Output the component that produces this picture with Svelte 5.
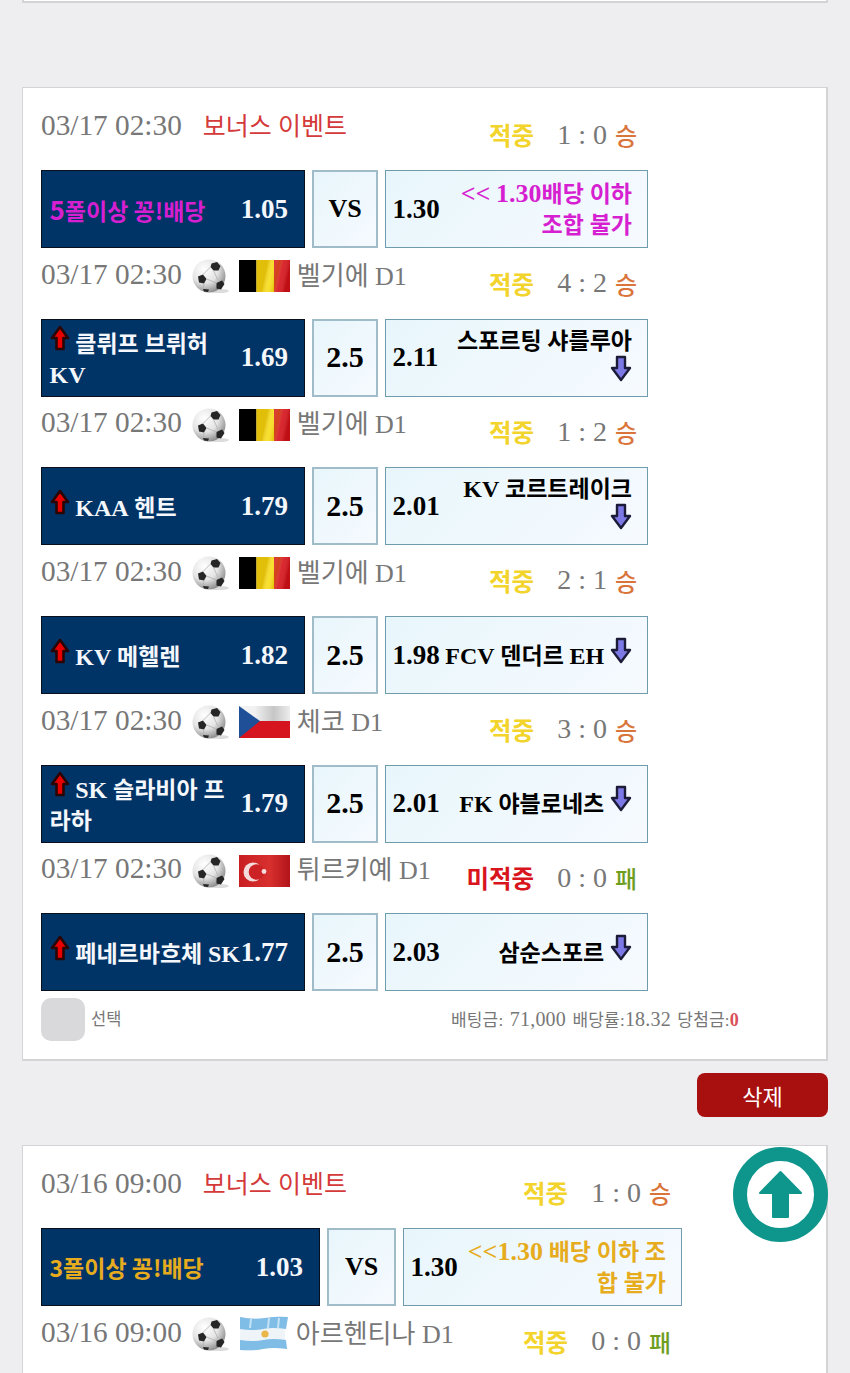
<script>
	const bonus = (date, score, outcome, home, odds1, odds2, away, color) => ({
		date, bonus: true, result: { label: '적중', score, outcome, kind: 'win' },
		home, odds1, mid: 'VS', odds2, away, color
	});
	const game = (flag, league, label, score, outcome, home, odds1, odds2, away) => ({
		date: '03/17 02:30', flag, league,
		result: { label, score, outcome, kind: outcome === '승' ? 'win' : 'lose' },
		home, odds1, mid: '2.5', odds2, away
	});

	const slip = [
		bonus('03/17 02:30', '1 : 0', '승', '5폴이상 꽁!배당', '1.05', '1.30', '<< 1.30배당 이하 조합 불가', 'magenta'),
		game('be', '벨기에 D1', '적중', '4 : 2', '승', '클뤼프 브뤼허 KV', '1.69', '2.11', '스포르팅 샤를루아'),
		game('be', '벨기에 D1', '적중', '1 : 2', '승', 'KAA 헨트', '1.79', '2.01', 'KV 코르트레이크'),
		game('be', '벨기에 D1', '적중', '2 : 1', '승', 'KV 메헬렌', '1.82', '1.98', 'FCV 덴더르 EH'),
		game('cz', '체코 D1', '적중', '3 : 0', '승', 'SK 슬라비아 프라하', '1.79', '2.01', 'FK 야블로네츠'),
		game('tr', '튀르키예 D1', '미적중', '0 : 0', '패', '페네르바흐체 SK', '1.77', '2.03', '삼순스포르')
	];

	// latin runs sit larger than the hangul next to them
	const pieces = (text) => text.split(/([A-Za-z0-9<.]+)/);
</script>

{#snippet upArrow()}
	<svg class="arrow" width="20" height="27" viewBox="0 0 20 27">
		<path d="M10 2 L18 13 L13.5 13 L13.5 24 L6.5 24 L6.5 13 L2 13 Z" fill="#e60000" stroke="#2a0505" stroke-width="2.6" stroke-linejoin="round" />
	</svg>
{/snippet}

{#snippet downArrow()}
	<svg class="arrow" width="22" height="27" viewBox="0 0 22 27">
		<path d="M7 2 L15 2 L15 13 L20 13 L11 25 L2 13 L7 13 Z" fill="#7c79e6" stroke="#1c1c38" stroke-width="2.4" stroke-linejoin="round" />
	</svg>
{/snippet}

{#snippet label(text)}
	{#each pieces(text) as piece, i}{#if i % 2}<span class="latin">{piece}</span>{:else}{piece}{/if}{/each}
{/snippet}

{#snippet ball()}
	<svg class="ball" width="38" height="36" viewBox="0 0 38 36">
		<defs>
			<radialGradient id="ballShade" cx="0.36" cy="0.3" r="0.75">
				<stop offset="0" stop-color="#ffffff" />
				<stop offset="0.55" stop-color="#e4e4e4" />
				<stop offset="1" stop-color="#868686" />
			</radialGradient>
			<filter id="ballSoft"><feGaussianBlur stdDeviation="0.5" /></filter>
		</defs>
		<ellipse cx="27" cy="32" rx="10" ry="2" fill="#dcdcdc" />
		<circle cx="17" cy="17" r="16.5" fill="url(#ballShade)" />
		<g fill="#262626" filter="url(#ballSoft)">
			<path d="M19.5 4.5 L25 3 L28.5 7 L26.5 11.5 L21.5 11.5 L18.5 8 Z" />
			<path d="M6 17.5 L11 15.5 L14.5 20 L12 24.5 L7 23.5 Z" />
			<path d="M24.5 24 L30 21.5 L32.5 25 L29 30.5 L24.5 29.5 Z" />
			<path d="M11 30 L17 30.5 L16 33 L12 32.5 Z" />
		</g>
		<path d="M18.5 8 L11 15.5 M14.5 20 L24.5 24 M21.5 11.5 L26 21.5 M12 24.5 L11 30" stroke="#b0b0b0" stroke-width="0.8" />
	</svg>
{/snippet}

{#snippet flag(code)}
	{#if code === 'be'}
		<svg class="flag" width="51" height="32" viewBox="0 0 51 32">
			<defs>
				<linearGradient id="beSheen" x1="0" x2="1" y1="0" y2="0.2">
					<stop offset="0.33" stop-color="#c79a00" stop-opacity="0.45" />
					<stop offset="0.5" stop-color="#fff" stop-opacity="0.12" />
					<stop offset="0.66" stop-color="#c79a00" stop-opacity="0.35" />
					<stop offset="0.8" stop-color="#fff" stop-opacity="0.08" />
					<stop offset="1" stop-color="#700" stop-opacity="0.25" />
				</linearGradient>
			</defs>
			<rect width="17.5" height="32" fill="#000" />
			<rect x="17.5" width="17.5" height="32" fill="#f7dc10" />
			<rect x="35" width="16" height="32" fill="#d6141c" />
			<rect x="17.5" width="33.5" height="32" fill="url(#beSheen)" />
		</svg>
	{:else if code === 'cz'}
		<svg class="flag" width="51" height="32" viewBox="0 0 51 32">
			<defs>
				<linearGradient id="czSheen" x1="0" x2="1" y1="0" y2="0">
					<stop offset="0.3" stop-color="#f2f2f2" />
					<stop offset="0.68" stop-color="#c6c6c6" />
					<stop offset="1" stop-color="#ececec" />
				</linearGradient>
			</defs>
			<rect width="51" height="15" fill="url(#czSheen)" />
			<rect y="15" width="51" height="17" fill="#d5141f" />
			<path d="M0 0 L21 15 L0 32 Z" fill="#1f4f96" />
		</svg>
	{:else if code === 'tr'}
		<svg class="flag" width="51" height="32" viewBox="0 0 51 32">
			<defs>
				<linearGradient id="trSheen" x1="0" x2="1" y1="0" y2="0">
					<stop offset="0" stop-color="#c81e22" />
					<stop offset="0.6" stop-color="#d8302e" />
					<stop offset="1" stop-color="#b2141a" />
				</linearGradient>
			</defs>
			<rect width="51" height="32" fill="url(#trSheen)" />
			<circle cx="14" cy="17" r="9.5" fill="#f5dcdc" />
			<circle cx="17.5" cy="17" r="7.8" fill="#cd2225" />
			<circle cx="25" cy="16.5" r="2.4" fill="#f5dcdc" />
		</svg>
	{:else}
		<svg class="flag" width="50" height="36" viewBox="0 0 50 36">
			<path d="M1 1 Q14 4 26 2 T49 1 L46 12 L46 23 L48 33 Q34 31 24 33 T1 34 L1 23 L1 12 Z" fill="#eef4f8" />
			<path d="M1 1 Q14 4 26 2 T49 1 L47 13 Q34 11 24 13 T1 13 Z" fill="#7fbde6" />
			<path d="M1 24 Q14 26 24 24 T47 24 L48 33 Q34 31 24 33 T1 34 Z" fill="#7fbde6" />
			<path d="M12 3 L11 12 M30 2 L29 12 M40 2 L39 12" stroke="#c4e2f5" stroke-width="2" />
			<circle cx="26" cy="18" r="3.6" fill="#e9b64a" />
		</svg>
	{/if}
{/snippet}

{#snippet result(r)}
	<div class="result">
		<span class="hit" class:miss={r.label === '미적중'}>{r.label}</span>
		<span class="score">{r.score}</span>
		<span class="outcome" class:lose={r.kind === 'lose'}>{r.outcome}</span>
	</div>
{/snippet}

{#snippet meta(b)}
	<div class="meta">
		<span class="date">{b.date}</span>
		{#if b.bonus}
			<span class="bonus">보너스 이벤트</span>
		{:else}
			{@render ball()}
			{@render flag(b.flag)}
			<span class="league">{b.league}</span>
		{/if}
	</div>
{/snippet}

<div class="page">
	<div class="prev-card"></div>

	<section class="card first">
		{#each slip as b}
			<div class="info">
				{@render meta(b)}
				{@render result(b.result)}
			</div>
			<div class="row">
				<div class="box home">
					<div class="name" class:magenta={b.color === 'magenta'} class:sans={b.bonus}>
						{#if !b.bonus}{@render upArrow()}{/if}
						{@render label(b.home)}
					</div>
					<div class="odds">{b.odds1}</div>
				</div>
				<div class="box mid" class:vs={b.bonus}>{b.mid}</div>
				<div class="box away">
					<div class="odds">{b.odds2}</div>
					<div class="name" class:magenta={b.color === 'magenta'}>
						{@render label(b.away)}
						{#if !b.bonus}{@render downArrow()}{/if}
					</div>
				</div>
			</div>
		{/each}

		<div class="footer">
			<span class="check"></span>
			<span class="check-label">선택</span>
			<span class="summary">배팅금: <span class="num">71,000</span> 배당률:<span class="num">18.32</span> 당첨금:<b>0</b></span>
		</div>
	</section>

	<div class="actions">
		<button class="delete">삭제</button>
	</div>

	<section class="card wide">
		<div class="info">
			{@render meta({ date: '03/16 09:00', bonus: true })}
			{@render result({ label: '적중', score: '1 : 0', outcome: '승', kind: 'win' })}
		</div>
		<div class="row">
			<div class="box home">
				<div class="name gold sans">{@render label('3폴이상 꽁!배당')}</div>
				<div class="odds">1.03</div>
			</div>
			<div class="box mid vs">VS</div>
			<div class="box away">
				<div class="odds">1.30</div>
				<div class="name gold">{@render label('<<1.30 배당 이하 조합 불가')}</div>
			</div>
		</div>
		<div class="info">
			<div class="meta">
				<span class="date">03/16 09:00</span>
				{@render ball()}
				{@render flag('ar')}
				<span class="league">아르헨티나 D1</span>
			</div>
			{@render result({ label: '적중', score: '0 : 0', outcome: '패', kind: 'lose' })}
		</div>
	</section>

	<button class="to-top" aria-label="맨 위로">
		<svg width="95" height="95" viewBox="0 0 95 95">
			<circle cx="47.5" cy="47.5" r="40.5" fill="#fff" stroke="#0f968c" stroke-width="14" />
			<path d="M47.5 25 L68 46 L55 46 L55 70 L40 70 L40 46 L27 46 Z" fill="#0f968c" stroke="#0f968c" stroke-width="2" stroke-linejoin="round" />
		</svg>
	</button>
</div>

<style>
	:global(body) {
		background: #eeeef0;
	}

	.page {
		position: relative;
		height: 1373px;
		overflow: hidden;
		padding: 0 22px;
		box-sizing: border-box;
		font-family: 'Liberation Serif', 'Noto Sans CJK KR', serif;
	}

	.prev-card {
		height: 1px;
		background: #fff;
		border: 2px solid #d4d4d6;
		border-top: 0;
		margin-bottom: 84px;
	}

	.card {
		background: #fff;
		border: 2px solid #d4d4d6;
		border-width: 1px 2px 2px 1px;
		padding: 11.7px 17px 0 18px;
		--col-home: 264px;
		--col-mid: 66px;
		--col-away: 263px;
	}

	.card.first {
		height: 974px;
		box-sizing: border-box;
	}

	.card.wide {
		--col-home: 279px;
		--col-mid: 69px;
		--col-away: 279px;
		margin-top: 28px;
		height: 400px;
	}

	.info {
		display: flex;
		justify-content: space-between;
		align-items: flex-start;
		height: 70.6px;
		width: calc(var(--col-home) + var(--col-mid) + var(--col-away) + 14px);
	}

	.meta {
		display: flex;
		align-items: center;
		height: 52px;
		color: #777;
		white-space: nowrap;
	}

	.date {
		font-size: 29.3px;
	}

	.bonus {
		margin-left: 21px;
		font-size: 25px;
		color: #d43a3a;
		position: relative;
		top: -2px;
	}

	.ball {
		margin: 6px 0 0 10px;
	}

	.flag {
		margin: 4px 0 0 9.5px;
	}

	.league {
		margin-left: 6.5px;
		font-size: 26px;
		position: relative;
		top: -1px;
	}

	.result {
		display: flex;
		align-items: center;
		height: 70px;
		margin-right: 11px;
		white-space: nowrap;
	}

	.hit {
		font-size: 24.5px;
		font-weight: 700;
		color: #f2d42c;
		margin-right: 23px;
	}

	.hit.miss {
		color: #d8141c;
	}

	.score {
		font-size: 28px;
		color: #777;
		margin-right: 8px;
	}

	.outcome {
		font-size: 24px;
		font-weight: 500;
		color: #d9743a;
	}

	.outcome.lose {
		color: #6f9e1e;
	}

	.row {
		display: grid;
		grid-template-columns: var(--col-home) var(--col-mid) var(--col-away);
		gap: 7px;
		height: 78px;
	}

	.box {
		box-sizing: border-box;
		display: flex;
		align-items: center;
		font-weight: 700;
		font-size: 23px;
		line-height: 31px;
		min-width: 0;
	}

	.home {
		background: #003366;
		border: 1px solid #0a0f1e;
		color: #f4f7fb;
		padding: 0 16px 0 7.5px;
	}

	.home .name {
		flex: 1;
		min-width: 0;
		margin-top: 3px;
	}

	.home .name.sans {
		margin-top: 0;
	}

	.latin {
		font-size: 24px;
	}

	.odds {
		flex-shrink: 0;
		font-size: 27px;
	}

	.sans {
		font-family: 'Noto Sans CJK KR', sans-serif;
	}

	.sans .latin {
		font-size: inherit;
	}

	.mid,
	.away {
		background: linear-gradient(135deg, #e8f6fb, #f6faff);
		border: 2px solid #a0bcc8;
		color: #000;
	}

	.mid {
		justify-content: center;
		font-size: 30px;
		padding-bottom: 2px;
	}

	.mid.vs {
		font-size: 26px;
	}

	.away {
		border-width: 1px;
		border-color: #6f9cad;
		padding: 0 15px 0 6.5px;
	}

	.away .odds {
		margin-right: 4px;
	}

	.away .name {
		flex: 1;
		min-width: 0;
		text-align: right;
	}

	.magenta {
		color: #d61fd0;
	}

	.gold {
		color: #e6ac1e;
	}

	.magenta .latin,
	.away .gold .latin {
		font-size: 26px;
	}

	.arrow {
		vertical-align: -2px;
		position: relative;
		top: -2px;
	}

	.footer {
		display: flex;
		align-items: center;
		margin-top: 7px;
		width: 768px;
		color: #777;
		font-size: 16.5px;
	}

	.check {
		width: 44px;
		height: 43px;
		border-radius: 10px;
		background: #d9d9dc;
	}

	.check-label {
		margin: 0 0 3px 6px;
	}

	.summary {
		margin: 0 70px 3px auto;
		font-size: 17px;
		word-spacing: 2px;
		letter-spacing: 0.2px;
	}

	.num {
		font-size: 20px;
	}

	.summary b {
		color: #d9505a;
		font-size: 18px;
	}

	.actions {
		display: flex;
		justify-content: flex-end;
		margin-top: 12px;
	}

	.delete {
		width: 131px;
		height: 44px;
		border: 0;
		border-radius: 8px;
		background: #a81010;
		color: #fff;
		font: 22px 'Noto Sans CJK KR', sans-serif;
	}

	.to-top {
		position: absolute;
		left: 733px;
		top: 1147px;
		width: 95px;
		height: 95px;
		padding: 0;
		border: 0;
		background: none;
	}

	.to-top svg {
		display: block;
	}
</style>
